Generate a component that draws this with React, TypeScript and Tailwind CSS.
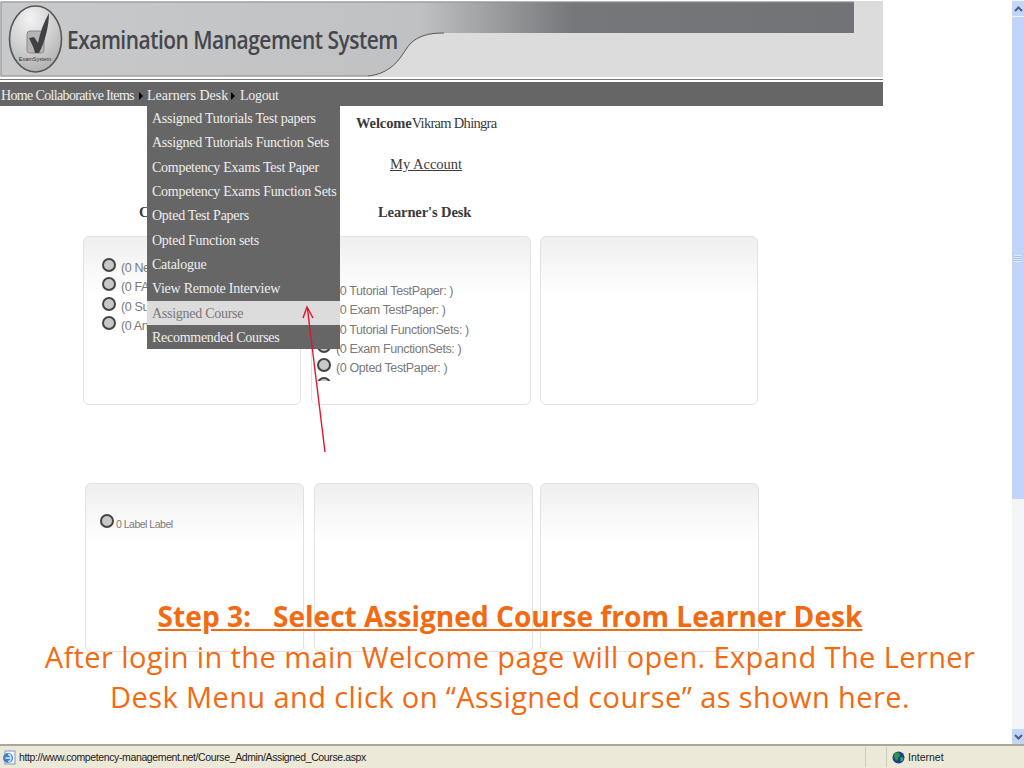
import React from "react";

const menu = [
  "Assigned Tutorials Test papers",
  "Assigned Tutorials Function Sets",
  "Competency Exams Test Paper",
  "Competency Exams Function Sets",
  "Opted Test Papers",
  "Opted Function sets",
  "Catalogue",
  "View Remote Interview",
  "Assigned Course",
  "Recommended Courses",
];

function Bullet() {
  return <span className="block w-[14px] h-[14px] shrink-0 rounded-full bg-[#c8c8c8] border-2 border-[#444]" />;
}

function Card({ w, ml = "", children }: { w: string; ml?: string; children?: React.ReactNode }) {
  return (
    <div className={`${w} ${ml} h-[169px] shrink-0 rounded-md border border-[#e2e2e2] bg-gradient-to-b from-[#efefef] via-white via-35% to-white overflow-hidden`}>
      {children}
    </div>
  );
}

function ListItem({ label }: { label: string }) {
  return (
    <div className="flex h-[19.25px] items-start gap-[5px] text-[12.5px] leading-[14px] tracking-[-0.38px] text-[#7a7a7a] whitespace-nowrap">
      <Bullet />
      <span className="pt-[3px]">{label}</span>
    </div>
  );
}

function Logo() {
  return (
    <svg width="883" height="76" viewBox="0 0 883 76" className="absolute inset-0">
      <defs>
        <linearGradient id="band" x1="0" x2="1" y1="0" y2="0">
          <stop offset="0" stopColor="#c8c9cb" />
          <stop offset="0.49" stopColor="#c0c1c3" />
          <stop offset="0.67" stopColor="#76777a" />
          <stop offset="1" stopColor="#727376" />
        </linearGradient>
        <radialGradient id="ball" cx="0.4" cy="0.2" r="0.9">
          <stop offset="0" stopColor="#f3f3f3" />
          <stop offset="0.6" stopColor="#c9c9c9" />
          <stop offset="1" stopColor="#a9a9a9" />
        </radialGradient>
      </defs>
      <rect x="0" y="0" width="883" height="76" fill="#dcdcdc" />
      <path d="M1 1 H854 V32 H444 C428 32 418 35 410 43 C404 50 400 60 390 67 C384 71 378 74 368 75 H1 Z" fill="url(#band)" />
      <path d="M1 75 V1 H854" fill="none" stroke="#8f9092" strokeWidth="1" />
      <path d="M1 75 H368" fill="none" stroke="#8f9092" strokeWidth="1" />
      <path d="M444 32 C428 32 418 35 410 43 C404 50 400 60 390 67 C384 71 378 74 368 75" fill="none" stroke="#55565a" strokeWidth="1" />
      <ellipse cx="35.5" cy="38" rx="26" ry="33" fill="url(#ball)" stroke="#55565a" strokeWidth="1.6" />
      <rect x="27" y="30" width="17" height="22" rx="3" fill="#b5b5b5" stroke="#8a8a8a" strokeWidth="1" />
      <path d="M29 37 L34 36 L38 42 C40 31 44 21 49 12 C49 25 45 41 39 52 L35 52 C34 46 31 42 29 37 Z" fill="#3f4044" />
      <text x="35" y="60" textAnchor="middle" fontSize="5.5" fontFamily="'Liberation Sans', sans-serif" fill="#333">ExamSystem</text>
    </svg>
  );
}

function IeIcon() {
  return (
    <svg width="14" height="15" viewBox="0 0 14 15">
      <rect x="3" y="1" width="10" height="13" fill="#f4f6fb" stroke="#6a86b8" strokeWidth="0.8" />
      <circle cx="6" cy="8" r="5" fill="#3f7fd0" />
      <path d="M3.5 8 H9 M6 4.5 C8 4.5 9 6 9 8 C9 10 8 11.5 6 11.5" stroke="#dff0ff" strokeWidth="1.3" fill="none" />
    </svg>
  );
}

function Globe() {
  return (
    <svg width="13" height="13" viewBox="0 0 13 13">
      <circle cx="6.5" cy="6.5" r="6" fill="#1a3f9a" />
      <path d="M3 2 C5 1 8 2 8 4 C8 6 6 5.5 6 7.5 C6 10 4 10 3 8 C2 6 1.5 4 3 2 Z" fill="#2f9a3a" />
      <path d="M9 6 C11 6 12 7 11 9 C10 11 8.5 11 8.5 9 C8.5 8 8 7 9 6 Z" fill="#3aa845" />
    </svg>
  );
}

export default function App() {
  return (
    <div className="relative w-[1024px] h-[768px] overflow-hidden bg-white flex flex-col font-['Liberation_Serif',serif]">
      <div className="flex-1 flex min-h-0">
        <main className="relative flex-1 min-w-0">
          <header className="relative w-[883px] h-[76px] mt-[1px]">
            <Logo />
            <div className="absolute left-[67px] top-[20px] origin-left scale-x-[0.838] font-['Open_Sans',sans-serif] font-semibold text-[25px] leading-[36px] tracking-[-0.6px] text-[#46474b] whitespace-nowrap">
              Examination Management System
            </div>
          </header>
          <div className="w-[883px] mt-[2px] h-px bg-[#777]" />
          <nav className="w-[883px] mt-[2px] h-[24px] bg-[#666] flex items-center pt-[3px] text-[14px] text-[#eeeeee] whitespace-nowrap">
            <span className="ml-px w-[133px] tracking-[-0.65px]">Home Collaborative Items</span>
            <span className="ml-[5px] w-0 h-0 border-y-[4px] border-y-transparent border-l-[4px] border-l-black" />
            <span className="ml-[4px] w-[80px]">Learners Desk</span>
            <span className="ml-[4px] w-0 h-0 border-y-[4px] border-y-transparent border-l-[4px] border-l-black" />
            <span className="ml-[5px] tracking-[-0.3px]">Logout</span>
          </nav>

          <div className="w-[883px] text-[#3a3a3a] text-[14.5px] whitespace-nowrap">
            <div className="pl-[356px] pt-[8px] leading-[18px]">
              <b className="tracking-[-0.1px]">Welcome</b>
              <span className="tracking-[-0.7px]">Vikram Dhingra</span>
            </div>
            <div className="pl-[390px] pt-[23px] leading-[18px] font-normal">
              <span className="underline">My Account</span>
            </div>
            <div className="flex pt-[30px] leading-[18px] font-bold tracking-[-0.1px]">
              <span className="ml-[139px] w-[239px]">C</span>
              <span>Learner's Desk</span>
            </div>
          </div>

          <section className="flex mt-[15px] ml-[83px] font-['Liberation_Sans',sans-serif]">
            <Card w="w-[218px]">
              <div className="pl-[18px] pt-[21px]">
                <ListItem label="(0 Ne" />
                <ListItem label="(0 FA" />
                <ListItem label="(0 Su" />
                <ListItem label="(0 An" />
              </div>
            </Card>
            <Card w="w-[220px]" ml="ml-[10px]">
              <div className="relative h-[144px] overflow-hidden pl-[5px] pt-[44px]">
                <ListItem label="(0 Tutorial TestPaper: )" />
                <ListItem label="(0 Exam TestPaper: )" />
                <ListItem label="(0 Tutorial FunctionSets: )" />
                <ListItem label="(0 Exam FunctionSets: )" />
                <ListItem label="(0 Opted TestPaper: )" />
                <ListItem label="" />
              </div>
            </Card>
            <Card w="w-[218px]" ml="ml-[9px]" />
          </section>

          <section className="flex mt-[78px] ml-[85px] font-['Liberation_Sans',sans-serif]">
            <Card w="w-[219px]">
              <div className="flex items-start pl-[14px] pt-[30px] text-[10.5px] leading-[12px] tracking-[-0.5px] text-[#7a7a7a]">
                <Bullet />
                <span className="ml-[2px] mt-[4px]">0 Label Label</span>
              </div>
            </Card>
            <Card w="w-[219px]" ml="ml-[10px]" />
            <Card w="w-[219px]" ml="ml-[7px]" />
          </section>

          <div className="absolute left-[147px] top-[106px] w-[193px] bg-[#666] text-[14px] tracking-[-0.27px] text-[#eeeeee] whitespace-nowrap">
            {menu.map((m) => (
              <div
                key={m}
                className={
                  m === "Assigned Course"
                    ? "h-[24.35px] leading-[25px] pl-[5px] bg-[#dcdcdc] text-[#777]"
                    : "h-[24.35px] leading-[25px] pl-[5px]"
                }
              >
                {m}
              </div>
            ))}
          </div>

          <svg className="absolute left-[295px] top-[300px]" width="40" height="160" viewBox="0 0 40 160">
            <path d="M30 152 L12.5 9" stroke="#e0142c" strokeWidth="1.4" fill="none" />
            <path d="M8 18 L12 7 L18 18" stroke="#e0142c" strokeWidth="1.4" fill="none" />
          </svg>

          <div className="absolute left-[10px] top-[596px] w-[1000px] text-center text-[#f26a12] text-[29px] leading-[40.5px] tracking-[0.4px] font-['Open_Sans',sans-serif]">
            <div className="font-bold underline text-[28.1px] tracking-normal">Step 3:&nbsp;&nbsp; Select Assigned Course from Learner Desk</div>
            <div>After login in the main Welcome page will open. Expand The Lerner</div>
            <div>Desk Menu and click on “Assigned course” as shown here.</div>
          </div>
        </main>

        <aside className="w-[12px] flex flex-col bg-[#f4f5f9] pt-px">
          <div className="h-[15px] bg-[#c5d5f8] flex items-center justify-center">
            <svg width="9" height="6" viewBox="0 0 9 6"><path d="M1 5 L4.5 1.5 L8 5" stroke="#4d6185" strokeWidth="2" fill="none" /></svg>
          </div>
          <div className="h-[482px] mt-px bg-[#c3d4fb] flex items-center justify-center">
            <div className="w-[6px] h-[7px] bg-[repeating-linear-gradient(to_bottom,#e8eeff_0,#e8eeff_1px,#a8bcea_1px,#a8bcea_2px)]" />
          </div>
          <div className="flex-1" />
          <div className="h-[15px] bg-[#c5d5f8] flex items-center justify-center">
            <svg width="9" height="6" viewBox="0 0 9 6"><path d="M1 1 L4.5 4.5 L8 1" stroke="#4d6185" strokeWidth="2" fill="none" /></svg>
          </div>
        </aside>
      </div>

      <footer className="h-[24px] bg-[#ece9d8] border-t-2 border-[#aca899] flex items-center font-['Liberation_Sans',sans-serif] text-[10.5px] text-[#222] whitespace-nowrap">
        <span className="ml-[2px] mr-[3px]"><IeIcon /></span>
        <span className="w-[846px] pt-px tracking-[-0.38px]">http://www.competency-management.net/Course_Admin/Assigned_Course.aspx</span>
        <span className="w-px h-[20px] bg-[#cfccb8]" />
        <span className="w-px h-[20px] ml-[20px] bg-[#cfccb8]" />
        <span className="ml-[5px] mr-[3px]"><Globe /></span>
        <span className="pt-px">Internet</span>
      </footer>
    </div>
  );
}
